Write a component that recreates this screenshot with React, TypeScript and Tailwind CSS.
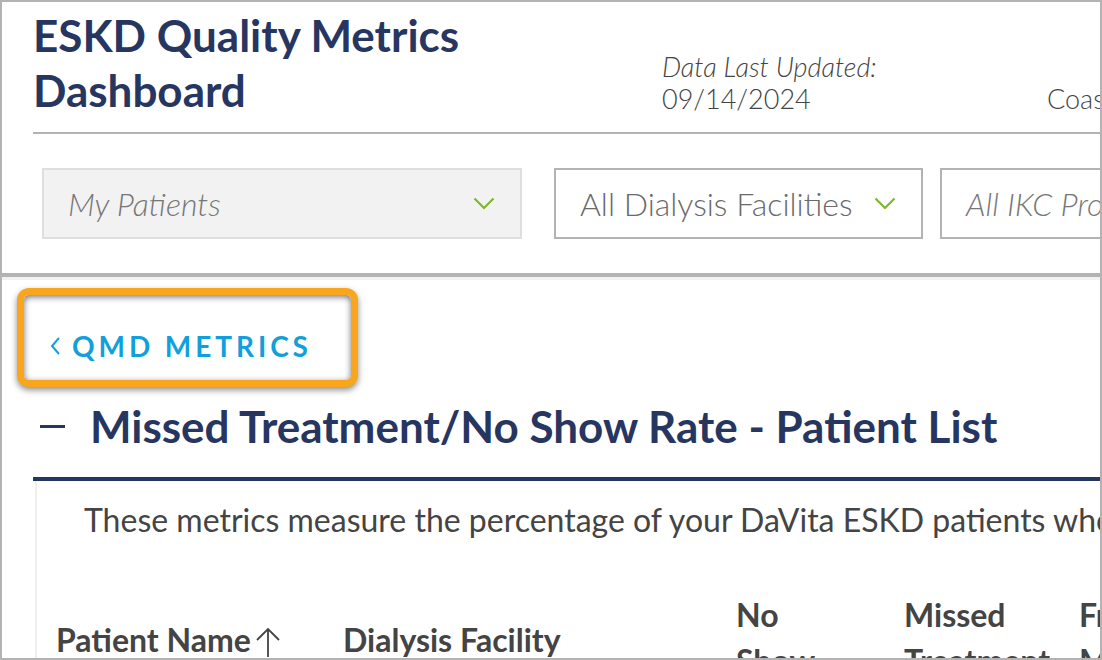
import React from 'react';

const navy = 'text-[#273661]';

function Chevron() {
  return (
    <svg width="22" height="13" viewBox="0 0 22 13" fill="none" className="shrink-0">
      <path d="M1.5 1.5 L11 11 L20.5 1.5" stroke="#7ab929" strokeWidth="2.2" />
    </svg>
  );
}

function FilterBox({ label, italic, muted, width, showChevron = true }: { label: string; italic?: boolean; muted?: boolean; width: string; showChevron?: boolean }) {
  return (
    <div
      className={`flex h-[71px] shrink-0 items-center justify-between border-2 pl-[24px] pr-[25px] ${width} ${
        muted ? 'border-[#dedede] bg-[#f2f2f2]' : 'border-[#b3b3b3] bg-white'
      }`}
    >
      <span className={`whitespace-nowrap text-[32px] font-light ${italic ? 'italic text-[#777]' : 'text-[#6a6a6a]'}`}>{label}</span>
      {showChevron && <Chevron />}
    </div>
  );
}

export default function App() {
  return (
    <div className="h-[660px] w-[1102px] overflow-hidden border-2 border-[#b3b3b3] bg-white font-['Lato','Liberation_Sans',sans-serif]">
      {/* header */}
      <header className="ml-[31px] flex items-end whitespace-nowrap border-b-2 border-[#b3b3b3] pb-[10px] pt-[6px]">
        <h1 className={`w-[629px] shrink-0 pb-[4px] text-[44px] font-bold leading-[55px] ${navy}`}>
          ESKD Quality Metrics
          <br />
          Dashboard
        </h1>
        <div className="w-[385px] shrink-0 pb-[7px] text-[27px] font-light leading-[32px] text-[#444]">
          <div className="italic">Data Last Updated:</div>
          <div>09/14/2024</div>
        </div>
        <div className="shrink-0 pb-[7px] text-[27px] font-light leading-[32px] text-[#444]">Coastal Region</div>
      </header>

      {/* filters */}
      <div className="flex border-b-4 border-[#b3b3b3] pb-[34px] pl-[40px] pt-[34px]">
        <FilterBox label="My Patients" italic muted width="w-[480px]" />
        <div className="ml-[32px]">
          <FilterBox label="All Dialysis Facilities" width="w-[369px]" />
        </div>
        <div className="ml-[17px]">
          <FilterBox label="All IKC Providers" italic width="w-[360px]" showChevron={false} />
        </div>
      </div>
      <div className="h-[3px] bg-[#f2f2f2]" />

      {/* body */}
      <div className="pt-[8px]">
        <div className="ml-[15px] flex h-[99px] w-[341px] items-center rounded-[12px] border-[7px] border-[#f9a51e] bg-white pl-[25px] pt-[16px] shadow-[0_3px_6px_rgba(0,0,0,0.45),inset_0_2px_6px_rgba(0,0,0,0.55)]">
          <svg width="12" height="20" viewBox="0 0 12 20" fill="none" className="mr-[11px]">
            <path d="M10 2 L3 10 L10 18" stroke="#11a0db" strokeWidth="2" />
          </svg>
          <span className="text-[28px] font-bold tracking-[0.14em] text-[#11a0db]">QMD METRICS</span>
        </div>

        <div className="ml-[31px] mt-[14px] flex items-center border-b-4 border-[#273661] pb-[26px]">
          <span className="ml-[7px] h-[3px] w-[25px] shrink-0 bg-[#273661]" />
          <h2 className={`ml-[25px] whitespace-nowrap text-[44px] font-bold leading-[50px] ${navy}`}>
            Missed Treatment/No Show Rate - Patient List
          </h2>
        </div>

        <div className="ml-[33px] border-l-2 border-[#efefef] pb-[40px]">
          <p className="whitespace-nowrap pl-[47px] pt-[17px] text-[32px] leading-[44px] text-[#444]">
            These metrics measure the percentage of your DaVita ESKD patients who missed treatments
          </p>
          <div className="mt-[50px] flex whitespace-nowrap text-[32px] font-bold leading-[46px] text-[#444]">
            <div className="ml-[19px] mt-[25px] w-[287px] shrink-0">
              Patient Name
              <svg width="26" height="32" viewBox="0 0 26 32" fill="none" className="ml-[4px] inline-block align-[-6px]">
                <path d="M13 31 V3 M2 14 L13 3 L24 14" stroke="#444" strokeWidth="1.8" />
              </svg>
            </div>
            <div className="mt-[25px] w-[393px] shrink-0">Dialysis Facility</div>
            <div className="w-[168px] shrink-0">
              No
              <br />
              Show
              <br />
              Rate
            </div>
            <div className="w-[175px] shrink-0">
              Missed
              <br />
              Treatment
              <br />
              Rate
            </div>
            <div className="shrink-0">
              Freq
              <br />
              Missed
            </div>
          </div>
        </div>
      </div>
    </div>
  );
}
